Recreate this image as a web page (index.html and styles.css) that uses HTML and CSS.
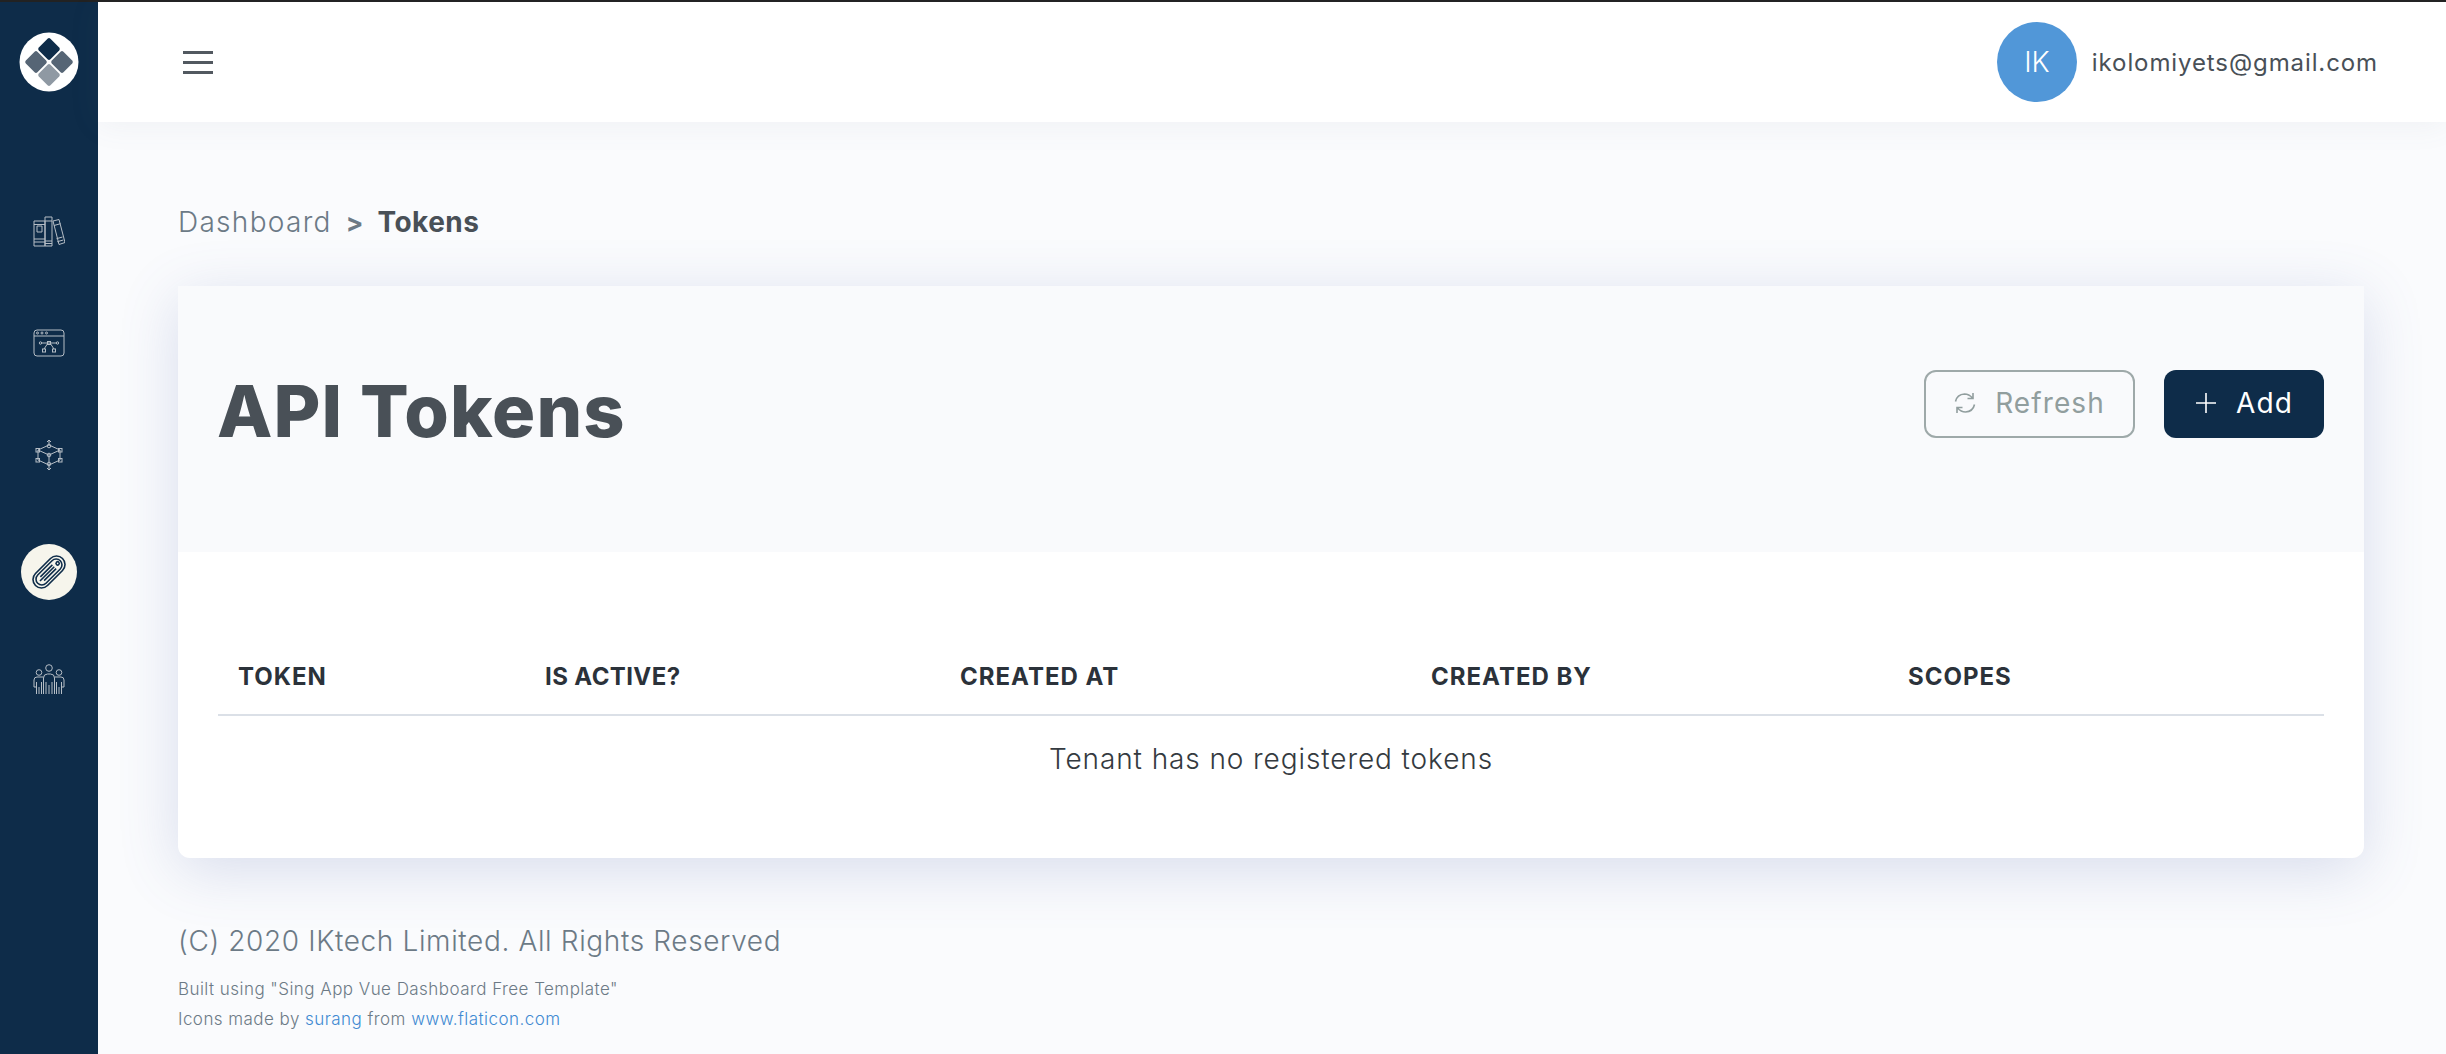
FILE: index.html
```html
<!DOCTYPE html>
<html lang="en">
<head>
	<meta charset="UTF-8">
	<title>API Tokens</title>
	<link rel="stylesheet" href="styles.css">
</head>
<body>
	<div class="layout">
		<nav class="sidebar">
			<div class="logo">
				<svg viewBox="0 0 60 60" width="60" height="60">
					<circle cx="30" cy="30" r="29.5" fill="#fff"/>
					<rect x="-8.200" y="-8.200" width="16.400" height="16.400" rx="2" transform="translate(30 17) rotate(45)" fill="#0e2c49"/>
					<rect x="-8.200" y="-8.200" width="16.400" height="16.400" rx="2" transform="translate(17 30) rotate(45)" fill="#566575"/>
					<rect x="-8.200" y="-8.200" width="16.400" height="16.400" rx="2" transform="translate(43 30) rotate(45)" fill="#566575"/>
					<rect x="-8.200" y="-8.200" width="16.400" height="16.400" rx="2" transform="translate(30 43) rotate(45)" fill="#8f99a3"/>
				</svg>
			</div>
			<ul class="menu">
				<li class="menu-item">
					<svg viewBox="0 0 32 32" width="32" height="32" class="icon">
						<path d="M1 6h11v25H1zM1 9.500h11M1 27h11M1 24h11M4 11h5v6H4zM12 2h7v29h-7zM12 6h7M12 26h7M12 28.500h7M20 6l6-1.500 6 23-6 2zM21 10.500l6.500-1.800M29.500 22l-6 1.700M30.300 25l-6 1.700"/>
					</svg>
				</li>
				<li class="menu-item">
					<svg viewBox="0 0 32 32" width="32" height="32" class="icon">
						<rect x="1" y="3" width="30" height="26" rx="3"/>
						<path d="M1 9h30M8 16h5M19 16h5M13 16h6M15 16l-4 6M17 16l4 6"/>
						<circle cx="4.500" cy="6" r="1"/><circle cx="9" cy="6" r="1"/><circle cx="13.500" cy="6" r="1"/>
						<circle cx="7.500" cy="16" r="1.200"/><circle cx="24.500" cy="16" r="1.200"/>
						<rect x="14.500" y="14.500" width="3" height="3"/><rect x="9.500" y="22" width="3" height="3"/><rect x="19.500" y="22" width="3" height="3"/>
					</svg>
				</li>
				<li class="menu-item">
					<svg viewBox="0 0 32 32" width="32" height="32" class="icon">
						<path d="M16 1v5M14 3l2-2 2 2M16 26v5M14 29l2 2 2-2M16 6L5 11v10l11 5 11-5V11zM5 11l11 5 11-5M16 16v10"/>
						<circle cx="16" cy="7" r="1.800"/><circle cx="16" cy="16" r="1.800"/><circle cx="16" cy="25" r="1.800"/>
						<rect x="3" y="9.500" width="3.500" height="3.500"/><rect x="25.500" y="9.500" width="3.500" height="3.500"/>
						<rect x="3" y="19.500" width="3.500" height="3.500"/><rect x="25.500" y="19.500" width="3.500" height="3.500"/>
					</svg>
				</li>
				<li class="menu-item active">
					<svg viewBox="0 0 32 32" width="34" height="34" class="icon">
						<g transform="rotate(45 16 16)">
							<rect x="8" y="-2" width="16" height="36" rx="8"/>
							<rect x="10.500" y="1" width="11" height="30" rx="5.500"/>
							<path d="M13.500 9v16M16 9v19M18.500 9v16"/>
							<circle cx="16" cy="4.500" r="1.500"/>
						</g>
					</svg>
				</li>
				<li class="menu-item">
					<svg viewBox="0 0 32 32" width="32" height="32" class="icon">
						<circle cx="16" cy="5" r="3.300"/><circle cx="6" cy="9.500" r="2.800"/><circle cx="26" cy="9.500" r="2.800"/>
						<path d="M10.500 31V15q0-4 4-4h3q4 0 4 4v16M13 31V19M16 31V22M19 31V19M10.500 14H4q-3 0-3 3v7h2.500M3.500 19v12M6 31v-7M8.500 31V19M21.500 14H28q3 0 3 3v7h-2.500M28.500 19v12M26 31v-7M23.500 31V19"/>
					</svg>
				</li>
			</ul>
		</nav>
		<div class="main">
			<header class="topbar">
				<div class="burger"><span></span><span></span><span></span></div>
				<div class="user">
					<div class="avatar">IK</div>
					<span class="email">ikolomiyets@gmail.com</span>
				</div>
			</header>
			<main class="content">
				<div class="breadcrumb">
					<span class="crumb">Dashboard</span>
					<span class="sep">&gt;</span>
					<span class="current">Tokens</span>
				</div>
				<section class="card">
					<div class="card-head">
						<h1>API Tokens</h1>
						<div class="actions">
							<button class="btn btn-outline">
								<svg viewBox="0 0 22 22" width="22" height="22" class="btn-icon">
									<path d="M1.500 9.500Q3 2.500 10.500 2q4.500 0 8 4M20.500 12.500q-1.500 7-9 7.500-4.500 0-8-4M19 1v5.500h-5.500M3 21v-5.500h5.500"/>
								</svg>
								Refresh
							</button>
							<button class="btn btn-primary">
								<svg viewBox="0 0 22 22" width="22" height="22" class="btn-icon">
									<path d="M11 1v20M1 11h20"/>
								</svg>
								Add
							</button>
						</div>
					</div>
					<div class="card-body">
						<table class="tokens">
							<thead>
								<tr>
									<th class="col-token">TOKEN</th>
									<th class="col-active">IS ACTIVE?</th>
									<th class="col-created">CREATED AT</th>
									<th class="col-by">CREATED BY</th>
									<th>SCOPES</th>
								</tr>
							</thead>
							<tbody>
								<tr><td colspan="5">Tenant has no registered tokens</td></tr>
							</tbody>
						</table>
					</div>
				</section>
				<footer class="footer">
					<p class="copy">(C) 2020 IKtech Limited. All Rights Reserved</p>
					<p class="small">Built using "Sing App Vue Dashboard Free Template"</p>
					<p class="small">Icons made by <a href="#">surang</a> from <a href="#">www.flaticon.com</a></p>
				</footer>
			</main>
		</div>
	</div>
</body>
</html>
```

FILE: styles.css
```css
*{
	margin: 0;
	padding: 0;
	box-sizing: border-box;
}
html,body{
	height: 100%;
}
body{
	font-family: "Inter", "Open Sans", sans-serif;
	background-color: #fafbfd;
	color: #495057;
	overflow: hidden;
}
li{
	list-style: none;
}
a{
	color: #3f8ad2;
	text-decoration: none;
}
.layout{
	display: flex;
	height: 100%;
	border-top: 2px solid #222;
}

/* sidebar */
.sidebar{
	width: 98px;
	flex-shrink: 0;
	background-color: #0e2c49;
}
.logo{
	display: flex;
	justify-content: center;
	padding-top: 30px;
}
.menu{
	display: flex;
	flex-direction: column;
	align-items: center;
	padding-top: 111px;
}
.menu-item{
	width: 56px;
	height: 56px;
	display: flex;
	align-items: center;
	justify-content: center;
	margin-bottom: 56px;
	border-radius: 50%;
}
.icon{
	fill: none;
	stroke: #b6bec6;
	stroke-width: 1;
}
.menu-item.active{
	background-color: #f6f5ec;
	margin-top: 5px;
	margin-bottom: 51px;
}
.menu-item.active .icon{
	stroke: #0e2c49;
	stroke-width: 1.500;
}

/* top bar */
.main{
	flex: 1;
	min-width: 0;
}
.topbar{
	height: 120px;
	background-color: #fff;
	display: flex;
	align-items: center;
	justify-content: space-between;
	padding: 0 68px 0 85px;
	box-shadow: 0 2px 30px rgba(108,117,125,.08);
	position: relative;
}
.burger{
	width: 30px;
	padding-top: 1px;
}
.burger span{
	display: block;
	height: 3px;
	background-color: #525960;
	margin-bottom: 7px;
}
.burger span:last-child{
	margin-bottom: 0;
}
.user{
	display: flex;
	align-items: center;
	gap: 15px;
}
.avatar{
	width: 80px;
	height: 80px;
	border-radius: 50%;
	background-color: #5197d8;
	color: #fff;
	display: flex;
	align-items: center;
	justify-content: center;
	font-size: 28px;
	font-weight: 300;
}
.email{
	font-size: 24px;
	font-weight: 400;
	letter-spacing: .9px;
	color: #495057;
}

/* page */
.content{
	padding: 80px 82px 0 80px;
}
.breadcrumb{
	display: flex;
	align-items: center;
	gap: 14px;
	height: 40px;
	font-size: 28px;
	margin-bottom: 44px;
}
.crumb{
	font-weight: 300;
	letter-spacing: 1.300px;
	color: #6c7a86;
}
.sep{
	font-weight: 700;
	font-size: 26px;
	color: #6c7a86;
}
.current{
	font-weight: 700;
	letter-spacing: .5px;
	color: #495057;
}
.card{
	height: 572px;
	border-radius: 0 0 12px 12px;
	background-color: #fff;
	box-shadow: 0 12px 60px rgba(80,100,170,.2);
}
.card-head{
	height: 266px;
	background-color: #f9fafc;
	display: flex;
	justify-content: space-between;
	padding: 84px 40px 0 39px;
}
.card-head h1{
	font-size: 72px;
	font-weight: 800;
	line-height: 82px;
	letter-spacing: 1.100px;
	color: #495057;
}
.actions{
	display: flex;
	gap: 29px;
}
.btn{
	height: 68px;
	border-radius: 12px;
	font-family: inherit;
	font-size: 28px;
	letter-spacing: 1.100px;
	line-height: 1;
	padding-bottom: 2px;
	display: flex;
	align-items: center;
	justify-content: center;
	gap: 19px;
}
.btn-icon{
	fill: none;
	stroke: currentColor;
	stroke-width: 1.600;
}
.btn-outline{
	width: 211px;
	background-color: transparent;
	border: 2px solid #9ea9a9;
	color: #919e9e;
}
.btn-primary{
	width: 160px;
	background-color: #0e2c49;
	border: 0;
	color: #fff;
}
.card-body{
	padding: 88px 40px 0;
}
.tokens{
	width: 100%;
	border-collapse: collapse;
	table-layout: fixed;
}
.tokens th{
	text-align: left;
	font-size: 24px;
	font-weight: 700;
	letter-spacing: 1px;
	height: 75px;
	padding: 0 20px 2px;
	border-bottom: 2px solid #dbe0e7;
	color: #2b323a;
}
.col-token{
	width: 307px;
}
.tokens .col-active{
	width: 415px;
	letter-spacing: .4px;
}
.col-created{
	width: 471px;
}
.col-by{
	width: 477px;
}
.tokens td{
	text-align: center;
	font-size: 28px;
	font-weight: 300;
	letter-spacing: .9px;
	padding-top: 26px;
	color: #343a40;
}
.footer{
	padding-top: 63px;
	color: #6c7a86;
}
.copy{
	font-size: 28px;
	font-weight: 300;
	letter-spacing: .63px;
	line-height: 40px;
	margin-bottom: 13px;
}
.small{
	font-size: 17px;
	font-weight: 300;
	letter-spacing: .45px;
	line-height: 30px;
}
```
